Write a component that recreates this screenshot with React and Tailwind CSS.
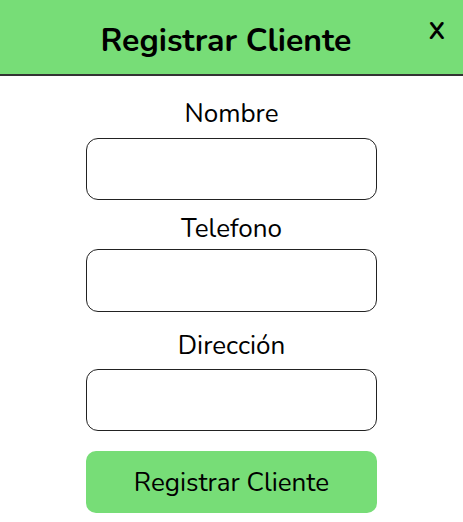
export default function App() {
  return (
    <div className="min-h-[522px] w-full bg-white font-['Nunito','Noto_Sans',sans-serif] text-black">
      {/* Header */}
      <div className="relative flex h-[76px] items-center justify-center border-b-2 border-[#333333] bg-[#77dd77] pt-[7px] pr-[11px]">
        <h1 className="text-[32px] font-bold leading-none">Registrar Cliente</h1>
        <button className="absolute right-[18px] top-[19px] text-[24px] font-bold leading-none">X</button>
      </div>

      {/* Form */}
      <form className="mx-auto flex w-[291px] flex-col items-center">
        <label className="mt-[22px] text-[26px] leading-[32px]">Nombre</label>
        <input className="mt-[8px] h-[62px] w-full rounded-xl border border-[#222222] px-3 outline-none" />

        <label className="mt-[13px] text-[26px] leading-[32px]">Telefono</label>
        <input className="mt-[4px] h-[63px] w-full rounded-xl border border-[#222222] px-3 outline-none" />

        <label className="mt-[18px] text-[26px] leading-[32px]">Dirección</label>
        <input className="mt-[7px] h-[62px] w-full rounded-xl border border-[#222222] px-3 outline-none" />

        <button
          type="button"
          className="mt-[20px] h-[62px] w-full rounded-[10px] bg-[#77dd77] text-[26px]"
        >
          Registrar Cliente
        </button>
      </form>
    </div>
  );
}
